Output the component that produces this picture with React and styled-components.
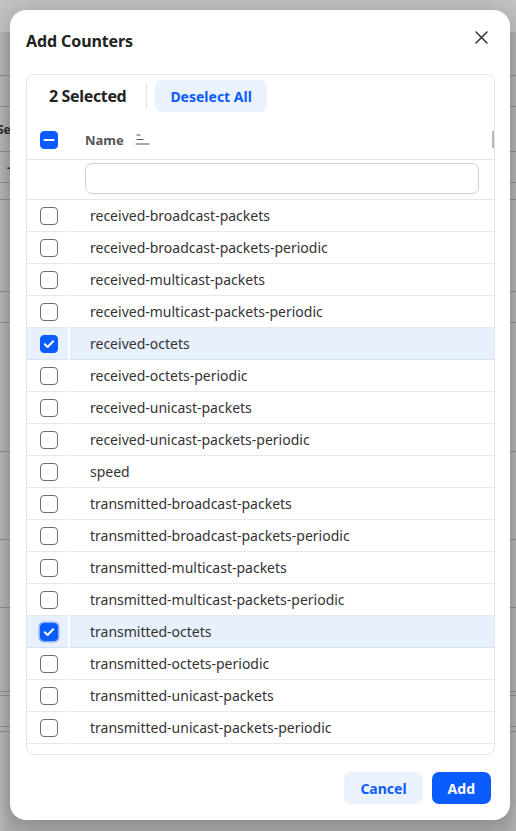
import React from 'react';
import styled, { createGlobalStyle } from 'styled-components';

const Global = createGlobalStyle`
  html, body { margin: 0; padding: 0; }
  body { font-family: "Noto Sans", "Open Sans", sans-serif; background: #adadad; }
  #root { width: 516px; height: 831px; }
`;

const Stage = styled.div`
  position: relative;
  width: 516px;
  height: 831px;
  overflow: hidden;
  background: linear-gradient(90deg, #b8b8b8 0px, #a9a9a9 10px, #a9a9a9 506px, #b3b3b3 516px);
`;

const BgPage = styled.div`
  display: flex;
  flex-direction: column;
`;

const BgTop = styled.div`
  height: 32px;
  background: #c2c2c2;
`;

const BgRow = styled.div`
  height: ${p => p.$h}px;
  border-bottom: 1px solid #8f8f8f;
  display: flex;
  align-items: center;
  font-weight: 700;
  font-size: 12px;
  color: #2b2b2b;
  box-sizing: border-box;
`;

const BgText = styled.span`
  margin-left: ${p => p.$ml}px;
`;

const Modal = styled.div`
  position: absolute;
  top: 10px;
  left: 10px;
  width: 500px;
  height: 810px;
  background: #fff;
  border-radius: 16px;
  box-shadow: 0 4px 24px rgba(0, 0, 0, 0.22);
  box-sizing: border-box;
  padding: 0 15px 0 16px;
  display: flex;
  flex-direction: column;
`;

const TitleBar = styled.div`
  height: 64px;
  padding-bottom: 2px;
  box-sizing: border-box;
  display: flex;
  align-items: center;
  justify-content: space-between;
`;

const Title = styled.h2`
  margin: 0;
  font-size: 16px;
  font-weight: 700;
  color: #222;
  letter-spacing: -0.1px;
`;

const CloseButton = styled.button`
  width: 20px;
  height: 20px;
  margin-right: 4px;
  margin-top: -8px;
  padding: 0;
  border: none;
  background: none;
  display: flex;
  align-items: center;
  justify-content: center;
  cursor: pointer;
`;

const Card = styled.div`
  height: 681px;
  flex: none;
  border: 1px solid #e4e4e4;
  border-radius: 8px;
  box-sizing: border-box;
  overflow: hidden;
  display: flex;
  flex-direction: column;
`;

const Toolbar = styled.div`
  height: 45px;
  flex: none;
  padding-left: 22px;
  padding-bottom: 3px;
  box-sizing: border-box;
  display: flex;
  align-items: center;
`;

const SelectedLabel = styled.span`
  font-size: 16px;
  font-weight: 700;
  color: #222;
  letter-spacing: -0.35px;
`;

const VDivider = styled.span`
  width: 1px;
  height: 24px;
  background: #e2e2e2;
  margin: 0 8px 0 20px;
`;

const SoftButton = styled.button`
  height: 32px;
  padding: 0 ${p => p.$px || 16}px;
  border: none;
  border-radius: 7px;
  background: ${p => (p.$primary ? '#0b5cff' : '#ebf2ff')};
  color: ${p => (p.$primary ? '#fff' : '#0b5cff')};
  font-family: "Noto Sans", sans-serif;
  font-size: 14px;
  font-weight: 700;
  cursor: pointer;
`;

const HeaderRow = styled.div`
  height: 40px;
  flex: none;
  display: grid;
  grid-template-columns: 41px 1fr;
  column-gap: 2px;
  align-items: center;
  border-bottom: 1px solid #e6e6e6;
  box-sizing: border-box;
`;

const CheckCell = styled.div`
  display: flex;
  align-items: center;
  padding-left: 13px;
`;

const HeaderName = styled.div`
  display: flex;
  align-items: center;
  padding-left: 15px;
  font-size: 13px;
  font-weight: 700;
  color: #555;
  gap: 11px;
`;

const ResizeHandle = styled.span`
  width: 2px;
  height: 17px;
  background: #b8b8b8;
  margin-left: auto;
`;

const FilterRow = styled.div`
  height: 40px;
  flex: none;
  display: flex;
  align-items: center;
  padding: 0 15px 2px 58px;
  border-bottom: 1px solid #e6e6e6;
  box-sizing: border-box;
`;

const FilterInput = styled.input`
  flex: 1;
  height: 31px;
  border: 1px solid #cfcfcf;
  border-radius: 7px;
  box-sizing: border-box;
  outline: none;
  padding: 0 8px;
  font-family: "Noto Sans", sans-serif;
  font-size: 14px;
`;

const RowList = styled.div`
  display: flex;
  flex-direction: column;
`;

const Row = styled.div`
  display: grid;
  grid-template-columns: 41px 1fr;
  column-gap: 2px;
  height: 32px;
`;

const RowCell = styled.div`
  display: flex;
  align-items: center;
  box-sizing: border-box;
  border-bottom: 1px solid ${p => (p.$selected ? '#d6e0f2' : '#e8e8e8')};
  background: ${p => (p.$selected ? '#e9f0fd' : '#fff')};
  padding-left: ${p => p.$pl}px;
  font-size: 14px;
  color: #333;
`;

const Box = styled.span`
  width: 18px;
  height: 18px;
  box-sizing: border-box;
  border-radius: 4px;
  border: 1.5px solid ${p => (p.$on ? '#0b5cff' : '#656c78')};
  background: ${p => (p.$on ? '#0b5cff' : '#fff')};
  box-shadow: ${p => (p.$focus ? '0 0 0 1.5px #8fb3fb' : 'none')};
  display: flex;
  align-items: center;
  justify-content: center;
  flex: none;
`;

const Footer = styled.div`
  display: flex;
  justify-content: flex-end;
  gap: 9px;
  padding: 17px 4px 0 0;
`;

const Checkbox = ({ on, focus, indeterminate }) => (
  <Box $on={on || indeterminate} $focus={focus}>
    {indeterminate && (
      <svg width="12" height="12" viewBox="0 0 12 12">
        <path d="M1.5 6h9" stroke="#fff" strokeWidth="2.2" strokeLinecap="round" />
      </svg>
    )}
    {on && (
      <svg width="12" height="12" viewBox="0 0 12 12">
        <path d="M1.8 6.3l2.8 2.7 5.6-5.8" fill="none" stroke="#fff" strokeWidth="2" strokeLinecap="round" strokeLinejoin="round" />
      </svg>
    )}
  </Box>
);

const items = [
  'received-broadcast-packets',
  'received-broadcast-packets-periodic',
  'received-multicast-packets',
  'received-multicast-packets-periodic',
  'received-octets',
  'received-octets-periodic',
  'received-unicast-packets',
  'received-unicast-packets-periodic',
  'speed',
  'transmitted-broadcast-packets',
  'transmitted-broadcast-packets-periodic',
  'transmitted-multicast-packets',
  'transmitted-multicast-packets-periodic',
  'transmitted-octets',
  'transmitted-octets-periodic',
  'transmitted-unicast-packets',
  'transmitted-unicast-packets-periodic',
];

const selected = new Set(['received-octets', 'transmitted-octets']);

const bgRows = [
  { h: 44 }, { h: 31 }, { h: 45, t: 'Se', ml: -3 }, { h: 31, t: '-', ml: 7 }, { h: 17 }, { h: 92 }, { h: 31 },
  { h: 129 }, { h: 88 }, { h: 68 }, { h: 84 }, { h: 4 }, { h: 31 }, { h: 5 },
];

export default function App() {
  return (
    <Stage>
      <Global />
      <BgPage>
        <BgTop />
        {bgRows.map((r, i) => (
          <BgRow key={i} $h={r.h}>
            {r.t && <BgText $ml={r.ml}>{r.t}</BgText>}
          </BgRow>
        ))}
      </BgPage>
      <Modal>
        <TitleBar>
          <Title>Add Counters</Title>
          <CloseButton aria-label="Close">
            <svg width="13" height="13" viewBox="0 0 13 13">
              <path d="M1 1l11 11M12 1L1 12" stroke="#333" strokeWidth="1.5" strokeLinecap="round" />
            </svg>
          </CloseButton>
        </TitleBar>
        <Card>
          <Toolbar>
            <SelectedLabel>2 Selected</SelectedLabel>
            <VDivider />
            <SoftButton $px={15}>Deselect All</SoftButton>
          </Toolbar>
          <HeaderRow>
            <CheckCell>
              <Checkbox indeterminate />
            </CheckCell>
            <HeaderName>
              Name
              <svg width="15" height="13" viewBox="0 0 15 13">
                <path d="M1.5 2h4M1.5 6.5h7M0.5 11h14" stroke="#555" strokeWidth="1.2" />
              </svg>
              <ResizeHandle />
            </HeaderName>
          </HeaderRow>
          <FilterRow>
            <FilterInput />
          </FilterRow>
          <RowList>
            {items.map(name => {
              const on = selected.has(name);
              return (
                <Row key={name}>
                  <RowCell $selected={on} $pl={13}>
                    <Checkbox on={on} focus={name === 'transmitted-octets'} />
                  </RowCell>
                  <RowCell $selected={on} $pl={20}>{name}</RowCell>
                </Row>
              );
            })}
          </RowList>
        </Card>
        <Footer>
          <SoftButton>Cancel</SoftButton>
          <SoftButton $primary>Add</SoftButton>
        </Footer>
      </Modal>
    </Stage>
  );
}
